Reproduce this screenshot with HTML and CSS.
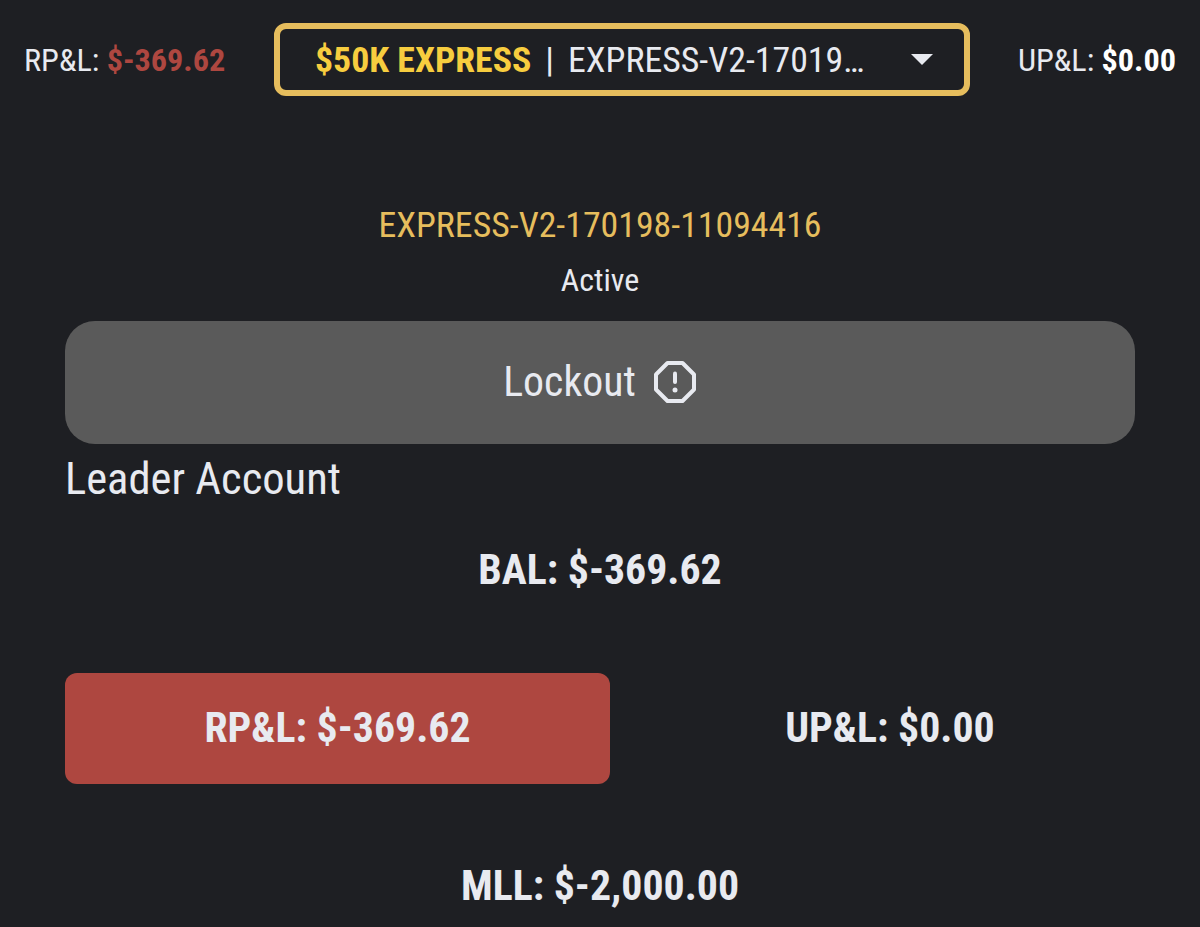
FILE: index.html
```html
<!DOCTYPE html>
<html lang="en">
  <head>
    <meta charset="UTF-8" />
    <meta name="viewport" content="width=device-width, initial-scale=1.0" />
    <title>Account</title>
    <link rel="stylesheet" href="styles.css" />
  </head>
  <body>
    <header class="topbar">
      <div class="pnl">RP&amp;L: <strong class="negative">$-369.62</strong></div>
      <button class="account-select">
        <span class="account-name"><b>$50K EXPRESS</b><span class="divider">|</span>EXPRESS-V2-17019…</span>
        <svg class="arrow" viewBox="0 0 22 11"><path d="M0 0h22L11 11z" /></svg>
      </button>
      <div class="pnl pnl-right">UP&amp;L: <strong>$0.00</strong></div>
    </header>

    <main class="account">
      <h1 class="account-id">EXPRESS-V2-170198-11094416</h1>
      <p class="status">Active</p>
      <button class="lockout">
        <span>Lockout</span>
        <svg class="lockout-icon" viewBox="0 0 44 44">
          <path d="M14.500 3h15L41 14.500v15L29.500 41h-15L3 29.500v-15z" />
          <path d="M22 13.500v8.500" />
          <circle cx="22" cy="30" r="2.500" />
        </svg>
      </button>
      <h2 class="leader">Leader Account</h2>

      <div class="stat">BAL: $-369.62</div>
      <div class="stat-row">
        <div class="stat stat-loss">RP&amp;L: $-369.62</div>
        <div class="stat">UP&amp;L: $0.00</div>
      </div>
      <div class="stat">MLL: $-2,000.00</div>
    </main>
  </body>
</html>
```
FILE: styles.css
```css
* {
  box-sizing: border-box;
}

body {
  margin: 0;
  background-color: #1e1f23;
  color: #e8eaf0;
  font-family: "Roboto Condensed", Roboto, sans-serif;
  font-stretch: 75%;
  overflow: hidden;
}

button {
  font: inherit;
  color: inherit;
  cursor: pointer;
}

.topbar {
  display: flex;
  align-items: center;
  height: 119px;
  padding: 0 24px;
}

.pnl {
  width: 250px;
  font-size: 32.2px;
  white-space: nowrap;
}

.pnl strong {
  color: #fff;
}

.pnl .negative {
  color: #ae4740;
}

.pnl-right {
  width: auto;
  margin-left: auto;
}

.account-select {
  display: flex;
  align-items: center;
  width: 696px;
  height: 73px;
  padding: 0 31px 0 35px;
  background: none;
  border: 6px solid #e6bd5d;
  border-radius: 12px;
  font-size: 35.8px;
}

.account-name {
  text-align: left;
  white-space: nowrap;
}

.account-name b {
  color: #f7cd3f;
}

.divider {
  margin: 0 14px;
}

.arrow {
  width: 22px;
  height: 11px;
  margin-left: auto;
  fill: #e8eaf0;
}

.account {
  padding: 79px 65px 0;
  text-align: center;
}

.account-id {
  margin: 0;
  color: #e6bd5d;
  font-size: 35.8px;
  font-weight: 400;
  line-height: 54px;
}

.status {
  margin: 4px 0 17px;
  font-size: 32px;
  line-height: 48px;
}

.lockout {
  display: flex;
  justify-content: center;
  align-items: center;
  gap: 17px;
  width: 100%;
  height: 123px;
  padding: 0 0 2px;
  background-color: #5a5a5a;
  border: none;
  border-radius: 30px;
  font-size: 41.8px;
}

.lockout-icon {
  width: 44px;
  height: 44px;
  fill: none;
  stroke: #e8eaf0;
  stroke-width: 4;
  stroke-linecap: round;
  stroke-linejoin: round;
}

.lockout-icon circle {
  fill: #e8eaf0;
  stroke: none;
}

.leader {
  margin: 0;
  font-size: 44.6px;
  font-weight: 400;
  line-height: 71px;
  text-align: left;
}

.stat {
  height: 111px;
  font-size: 41.8px;
  font-weight: 700;
  line-height: 110px;
}

.stat-row {
  display: grid;
  grid-template-columns: 545px 490px;
  justify-content: space-between;
  margin: 47px 0;
}

.stat-loss {
  background-color: #ae4740;
  border-radius: 12px;
}
```
